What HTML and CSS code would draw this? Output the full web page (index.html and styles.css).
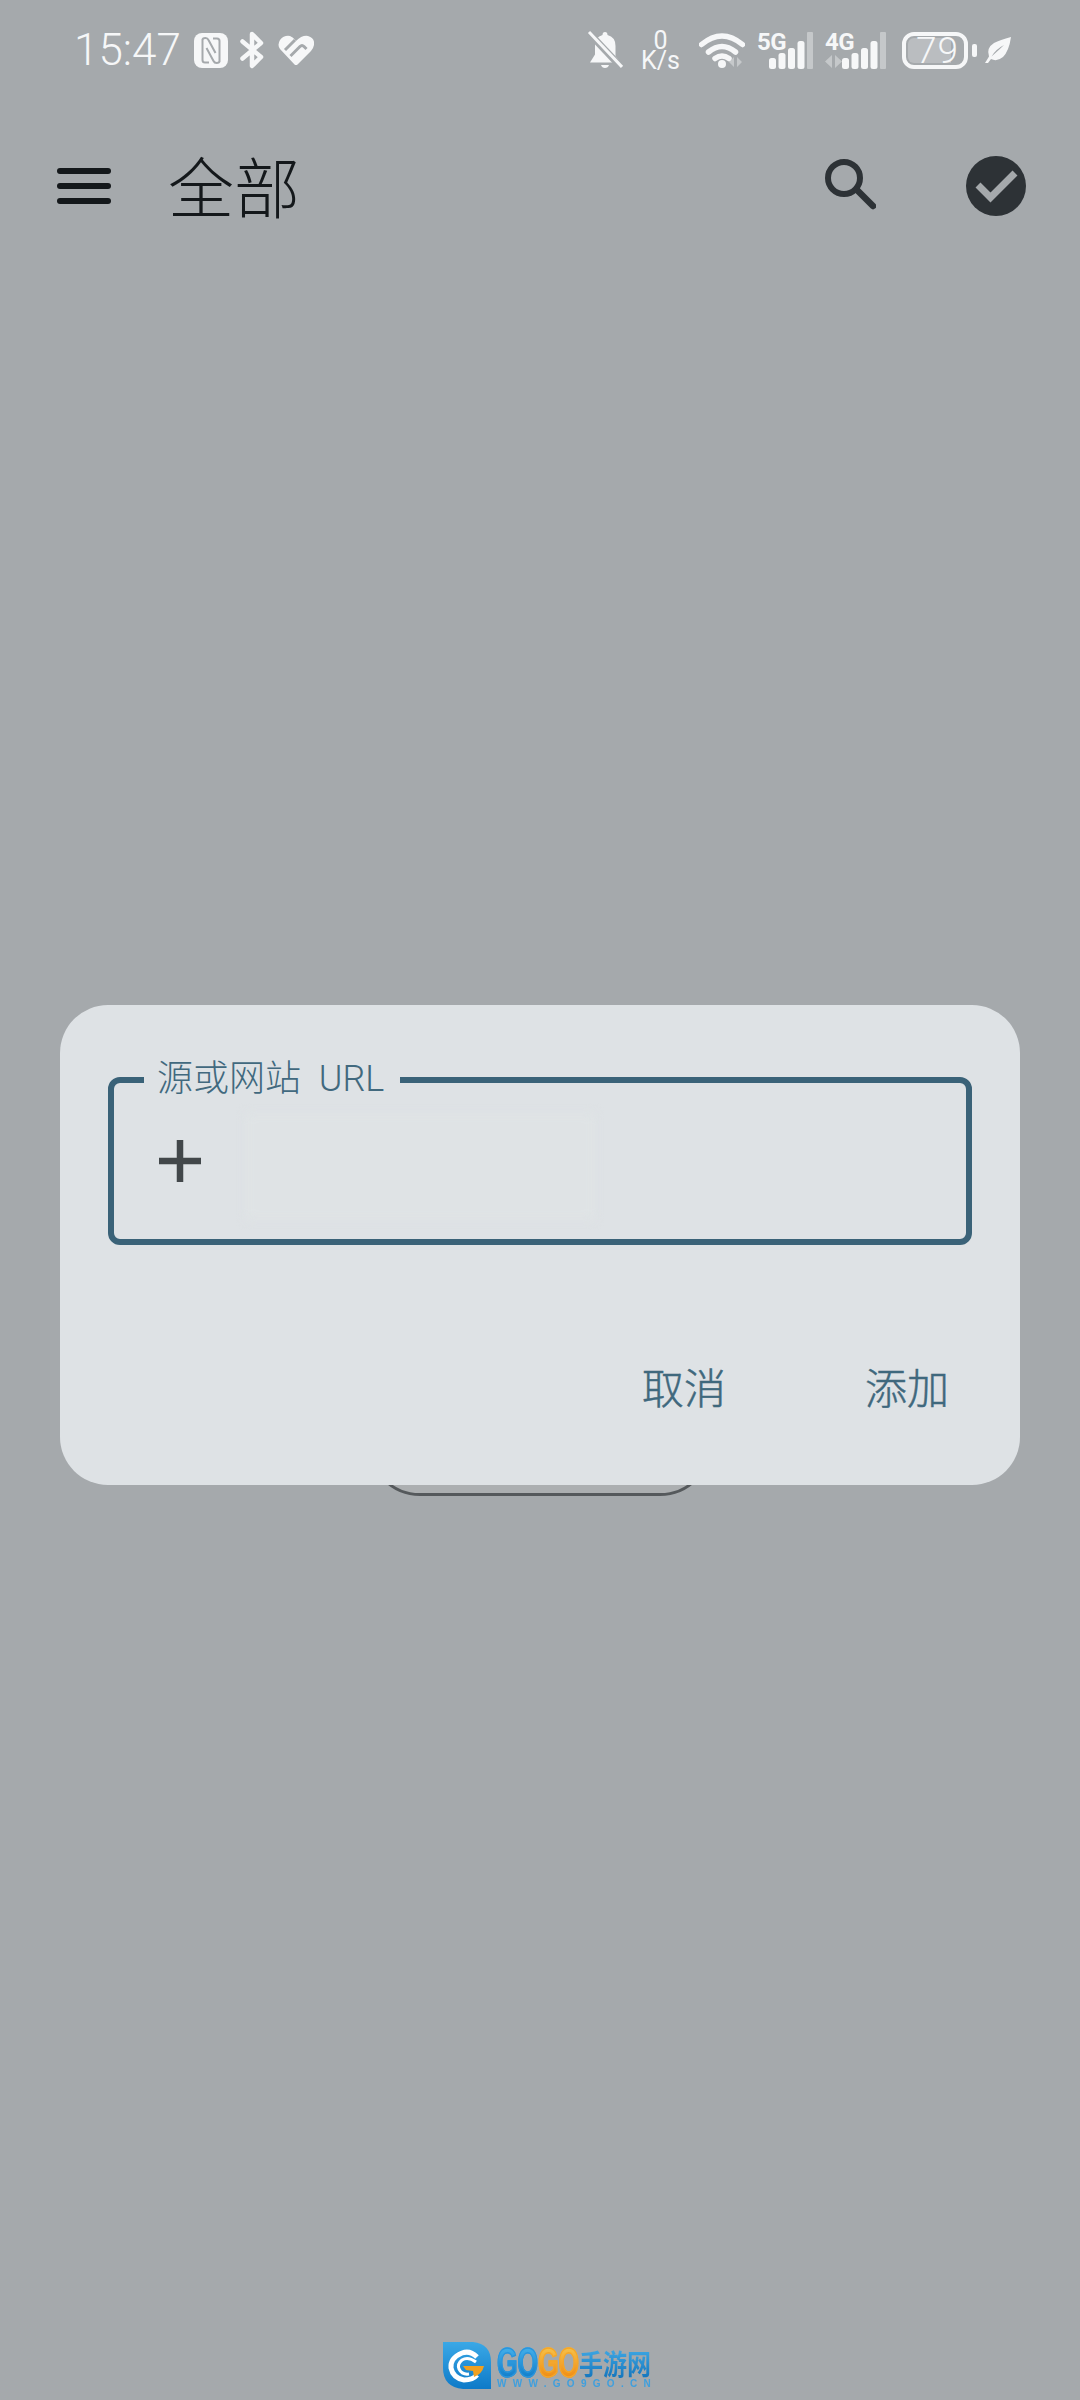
FILE: index.html
```html
<!DOCTYPE html>
<html lang="zh-CN">
<head>
<meta charset="utf-8">
<title>全部</title>
<link rel="stylesheet" href="styles.css">
</head>
<body>
<div class="page">
  <header class="statusbar">
    <span class="time">15:47</span>
    <svg class="ic-nfc" viewBox="0 0 34 35"><rect width="34" height="35" rx="8" fill="#f6f7f8"/><path d="M8.500 6v21q0 2.500 2.500 2.500h4M8.500 7q0-2 3-2 2 0 3 2l7 13" fill="none" stroke="#a5a9ac" stroke-width="2"/><path d="M25.500 29V8q0-2.500-2.500-2.500h-4M25.500 28q0 2-3 2-2 0-3-2l-7-13" fill="none" stroke="#a5a9ac" stroke-width="2"/></svg>
    <svg class="ic-bt" viewBox="0 0 25 38"><path d="M2.500 10.500 21 26 12 35V3l9 9L2.500 27.500" fill="none" stroke="#f6f7f8" stroke-width="4.500" stroke-linejoin="round" stroke-linecap="round"/></svg>
    <svg class="ic-heart" viewBox="0 0 36 30"><path d="M18 6Q24 0 30 1 37 3 36 10 35.500 13 33 16L19.500 29.500Q18 30.500 16.500 29.500L2 14Q-1 10 2 5 6 0 12 1 15 2 18 6z" fill="#f6f7f8"/><path d="M7 15 17 5M12.500 21 22 11.500Q24 9.500 26 11.500L28.500 14" fill="none" stroke="#a5a9ac" stroke-width="3"/></svg>
    <span class="status-space"></span>
    <svg class="ic-bell" viewBox="0 0 36 40"><path d="M18 2q2.500 0 2.500 3 8 2 8 11v10l5 6.500H3l5-8V15Q8 7 15.500 5 15.500 2 18 2zM14 35h8q-1 3-4 3t-4-3z" fill="#f6f7f8"/><path d="M1 2l34 36" stroke="#a5a9ac" stroke-width="7"/><path d="M2 2l33 35" stroke="#f6f7f8" stroke-width="3"/></svg>
    <span class="speed"><span class="speed-num">0</span><span class="speed-unit">K/s</span></span>
    <svg class="ic-wifi" viewBox="0 0 46 36"><path d="M2.500 12.500Q23-4.500 43.500 12.500M9.500 20q13.500-11 27 0M16 26.500q7-5 14 0" fill="none" stroke="#f6f7f8" stroke-width="5.500" stroke-linecap="round"/><circle cx="23" cy="32" r="4" fill="#f6f7f8"/><path d="M35 25v10l-5-5zM38 25v10l5-5z" fill="#f6f7f8" opacity=".4"/></svg>
    <span class="signal">
      <span class="net">5G</span>
      <svg class="ic-bars" viewBox="0 0 44 37"><rect x="0" y="26" width="7" height="11" rx="2.500" fill="#f6f7f8"/><rect x="9.500" y="21" width="7" height="16" rx="2.500" fill="#f6f7f8"/><rect x="19" y="16" width="7" height="21" rx="2.500" fill="#f6f7f8"/><rect x="28.500" y="9" width="7" height="28" rx="2.500" fill="#f6f7f8"/><rect x="38" y="0" width="6" height="37" rx="1" fill="#f6f7f8" opacity=".4"/></svg>
    </span>
    <span class="signal signal-b">
      <span class="net">4G</span>
      <svg class="ic-bars ic-bars-wide" viewBox="0 0 61 37"><path d="M7 23v13L0 29.500zM10 23v13l7-6.500z" fill="#f6f7f8" opacity=".4"/><rect x="17" y="26" width="7" height="11" rx="2.500" fill="#f6f7f8"/><rect x="26.500" y="21" width="7" height="16" rx="2.500" fill="#f6f7f8"/><rect x="36" y="16" width="7" height="21" rx="2.500" fill="#f6f7f8"/><rect x="45.500" y="9" width="7" height="28" rx="2.500" fill="#f6f7f8"/><rect x="55" y="0" width="6" height="37" rx="1" fill="#f6f7f8" opacity=".4"/></svg>
    </span>
    <span class="battery">
      <span class="battery-body"><span class="battery-fill"></span><span class="battery-num">79</span></span>
      <span class="battery-tip"></span>
    </span>
    <svg class="ic-leaf" viewBox="0 0 26 26"><path d="M26 0Q24 14 18 20 12 25 6 22L3 26H0l4-6.500Q1 11 9 6 15 3 26 0zM19 8Q11 12 6.500 19.500 14 13 19 8z" fill="#f6f7f8" fill-rule="evenodd"/></svg>
  </header>

  <nav class="appbar">
    <span class="menu"><span class="menu-line"></span><span class="menu-line"></span><span class="menu-line"></span></span>
    <h1 class="title">全部</h1>
    <svg class="ic-search" viewBox="0 0 51 51"><circle cx="19" cy="19" r="16" fill="none" stroke="#2d3236" stroke-width="6"/><path d="M32 31l16 16" stroke="#2d3236" stroke-width="6.500" stroke-linecap="round"/></svg>
    <svg class="ic-check" viewBox="0 0 60 60"><circle cx="30" cy="30" r="30" fill="#2d3236"/><path d="M12 29l12.500 12.500L49 17" fill="none" stroke="#a5a9ac" stroke-width="7"/></svg>
  </nav>

  <main class="main">
    <div class="dialog-wrap">
      <div class="ghost-button"></div>
      <section class="dialog">
        <div class="field">
          <span class="field-label">源或网站 URL</span>
          <svg class="ic-plus" viewBox="0 0 42 42"><path d="M21 0v42M0 21h42" stroke="#42474a" stroke-width="6.500"/></svg>
          <div class="field-blur"></div>
        </div>
        <div class="actions">
          <span class="action">取消</span>
          <span class="action">添加</span>
        </div>
      </section>
    </div>
  </main>

  <div class="watermark">
    <svg class="wm-logo" viewBox="0 0 48 47">
      <defs><linearGradient id="wmg" x1="0" y1="0" x2="0" y2="1"><stop offset="0" stop-color="#3aa8e6"/><stop offset="1" stop-color="#0e7ac8"/></linearGradient></defs>
      <path d="M0 0H30Q48 2 48 20V47H20Q0 45 0 26z" fill="url(#wmg)"/>
      <path d="M34 15Q27 8 19 11 7 16 8 26q2 10 13 12 9 0 13-5" fill="none" stroke="#fff" stroke-width="5"/>
      <path d="M33 20Q25 14 19 18q-5 4-3 9 3 6 10 5" fill="none" stroke="#fff" stroke-width="3"/>
      <path d="M20 24h21q-2 8-10 11l-1-6-7-1z" fill="#f0a020"/>
    </svg>
    <div class="wm-text">
      <div class="wm-name">
        <span class="wm-go"><span class="wm-go-text wm-blue">GO</span></span>
        <span class="wm-go"><span class="wm-go-text wm-orange">GO</span></span>
        <span class="wm-cn">手游网</span>
      </div>
      <div class="wm-url">WWW.GO9GO.CN</div>
    </div>
  </div>
</div>
</body>
</html>
```
FILE: styles.css
```css
* { box-sizing: border-box; }
html, body { margin: 0; padding: 0; }
body {
  font-family: "Roboto", "Noto Sans CJK SC", sans-serif;
  background: #a5a9ac;
}
.page {
  position: relative;
  width: 1080px;
  height: 2400px;
  overflow: hidden;
  background: #a5a9ac;
}
svg { display: block; flex: none; }

/* status bar */
.statusbar {
  display: flex;
  align-items: center;
  height: 100px;
  padding: 0 69px 0 74px;
  color: #f6f7f8;
}
.time {
  width: 106px;
  margin-right: 14px;
  font-size: 44px;
  font-weight: 300;
  line-height: 40px;
  letter-spacing: 0;
}
.ic-nfc { width: 34px; height: 35px; margin-right: 12px; }
.ic-bt { width: 25px; height: 38px; margin-right: 13px; }
.ic-heart { width: 36px; height: 30px; }
.status-space { flex: 1; }
.ic-bell { width: 36px; height: 40px; margin-right: 19px; }
.speed {
  display: flex;
  flex-direction: column;
  align-items: center;
  width: 37px;
  height: 42px;
  margin-right: 20px;
  padding-top: 2px;
  font-weight: 400;
}
.speed-num { font-size: 25px; line-height: 20px; }
.speed-unit { font-size: 25px; line-height: 20px; white-space: nowrap; }
.ic-wifi { width: 46px; height: 36px; margin-right: 12px; }
.signal { position: relative; display: block; width: 56px; height: 38px; margin-right: 12px; }
.signal-b { width: 61px; margin-right: 16px; }
.net {
  position: absolute;
  left: 0;
  top: 1px;
  font-size: 24px;
  font-weight: 700;
  line-height: 20px;
  letter-spacing: -.5px;
  display: block;
}
.ic-bars { position: absolute; right: 0; bottom: 0; width: 44px; height: 37px; }
.ic-bars-wide { width: 61px; }
.battery { display: flex; align-items: center; margin-right: 8px; }
.battery-body {
  position: relative;
  display: block;
  width: 66px;
  height: 37px;
  border: 4px solid #f6f7f8;
  border-radius: 12px;
}
.battery-fill {
  position: absolute;
  left: 2px;
  top: 2px;
  bottom: 2px;
  width: 43px;
  background: rgba(255, 255, 255, .24);
  border-radius: 6px 0 0 6px;
}
.battery-num {
  position: absolute;
  left: 10px;
  top: 0;
  font-size: 37px;
  font-weight: 300;
  line-height: 29px;
  letter-spacing: 1px;
}
.battery-tip {
  display: block;
  width: 5px;
  height: 13px;
  margin-left: 4px;
  background: #f6f7f8;
  border-radius: 2px;
}
.ic-leaf { width: 26px; height: 26px; }

/* app bar */
.appbar {
  display: flex;
  align-items: center;
  height: 172px;
  padding: 0 54px 0 57px;
}
.menu {
  display: flex;
  flex-direction: column;
  gap: 9px;
  width: 54px;
  margin-right: 57px;
}
.menu-line { display: block; height: 6px; background: #14181b; border-radius: 3px; }
.title {
  flex: 1;
  margin: -5px 0 0;
  color: #14181b;
  font-family: "Noto Sans CJK SC", sans-serif;
  font-size: 66px;
  font-weight: 300;
  line-height: 72px;
}
.ic-search { width: 51px; height: 51px; margin: -4px 90px 0 0; }
.ic-check { width: 60px; height: 60px; }

/* dialog */
.main { padding: 733px 60px 0; }
.dialog-wrap { position: relative; width: 960px; }
.ghost-button {
  position: absolute;
  left: 308px;
  top: 387px;
  width: 344px;
  height: 104px;
  border: 3px solid #55595c;
  border-radius: 52px;
  background: #acafb1;
}
.dialog {
  position: relative;
  height: 480px;
  padding: 72px 48px 0;
  background: #dee2e5;
  border-radius: 48px;
}
.field {
  position: relative;
  display: flex;
  align-items: center;
  height: 168px;
  padding-left: 45px;
  border: 6px solid #3a6278;
  border-radius: 12px;
}
.field-label {
  position: absolute;
  left: 30px;
  top: -24px;
  padding: 0 16px 0 13px;
  background: #dee2e5;
  color: #41697e;
  font-size: 36px;
  font-weight: 300;
  line-height: 40px;
  word-spacing: 9px;
  white-space: nowrap;
}
.ic-plus { width: 42px; height: 42px; margin-right: 44px; }
.field-blur {
  width: 350px;
  height: 107px;
  margin-top: 11px;
  background: #dfe3e5;
  border-radius: 4px;
  filter: blur(5px);
}
.actions {
  display: flex;
  justify-content: flex-end;
  gap: 139px;
  margin: 121px 23px 0 0;
}
.action {
  color: #3f687d;
  font-family: "Noto Sans CJK SC", sans-serif;
  font-size: 42px;
  font-weight: 300;
  line-height: 40px;
  -webkit-text-stroke: .5px #3f687d;
}

/* watermark */
.watermark {
  position: absolute;
  left: 443px;
  top: 2342px;
  display: flex;
  gap: 6px;
  filter: blur(.6px);
}
.wm-logo { width: 48px; height: 47px; }
.wm-text { display: flex; flex-direction: column; padding-top: 5px; }
.wm-name { display: flex; height: 32px; align-items: center; }
.wm-go { display: block; width: 41px; height: 32px; }
.wm-go-text {
  display: inline-block;
  font-family: "Liberation Sans", sans-serif;
  font-size: 42px;
  font-weight: 700;
  line-height: 32px;
  transform: scaleX(.63);
  transform-origin: left center;
  -webkit-background-clip: text;
  background-clip: text;
  color: transparent;
}
.wm-blue {
  background-image: linear-gradient(#45b0ea, #0f7cc9);
  -webkit-text-stroke: 1.500px #2a95dc;
}
.wm-orange {
  background-image: linear-gradient(#f6c24a, #f08a12);
  -webkit-text-stroke: 1.500px #f4a62a;
}
.wm-cn {
  display: block;
  width: 72px;
  margin-left: 0;
  font-family: "Noto Sans CJK SC", sans-serif;
  font-size: 24px;
  font-weight: 700;
  line-height: 32px;
  white-space: nowrap;
  transform: scaleY(1.18);
  -webkit-background-clip: text;
  background-clip: text;
  color: transparent;
  background-image: linear-gradient(#45b0ea, #0f6fb8);
}
.wm-url {
  color: #3f9fdd;
  font-family: "Liberation Sans", sans-serif;
  font-size: 10px;
  font-weight: 700;
  line-height: 10px;
  letter-spacing: 6.300px;
  white-space: nowrap;
}
```
